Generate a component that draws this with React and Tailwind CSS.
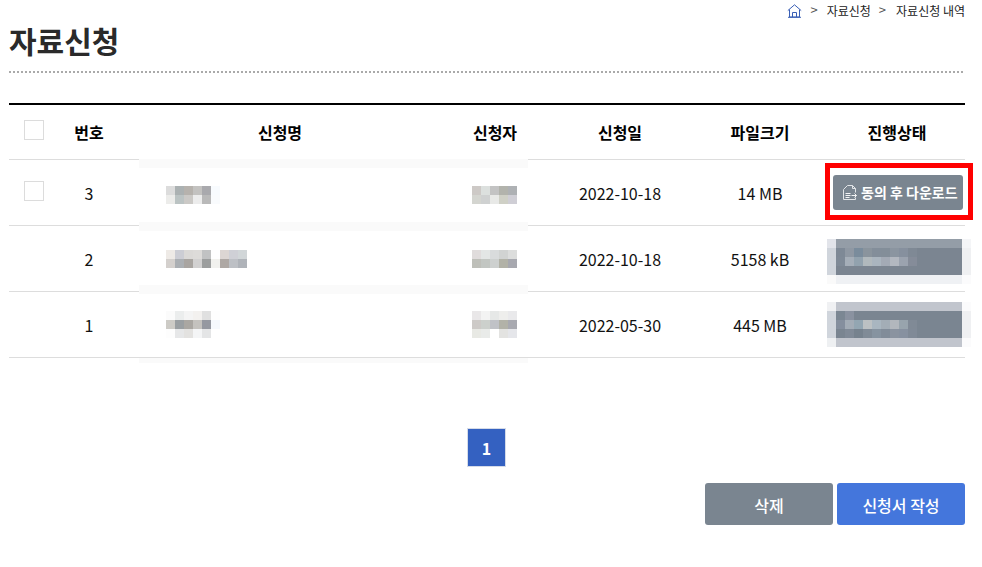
const FONT = "font-['Noto_Sans_CJK_KR','Noto_Sans',sans-serif]";
const GRID = "grid grid-cols-[50px_60px_322px_108px_142px_138px_136px] items-center";

const m = (s) => s.split(" ").map((c) => "#" + c);

const rows = [
  {
    no: 3,
    date: "2022-10-18",
    size: "14 MB",
    check: true,
    band: "top-[-1px]",
    name: [m("dcdcdc abb1b2 b6b2ad c3c2c0 a9a9ad f8fbfe"), m("ececea bbc3c3 cbc9c6 ececec b9b9b9 f9fbfd")],
    user: [m("cdc9c6 dce0de c3c3c3 b2b3ac aeb1b4"), m("d4d5d0 cfd1d1 e8e9e7 cfd0c6 cfced5")],
  },
  {
    no: 2,
    date: "2022-10-18",
    size: "5158 kB",
    band: "top-[-4px]",
    name: [
      m("eeeae6 cccdd4 dbd9d7 dddbd9 c1c2c3 fefeff dcd6d3 cfd0d6 d1d6d8"),
      m("d4d0cd abafb3 a9a5a1 d2d1d1 9c9e9e f1f1ee aea8a4 bdc0c5 afb3b9"),
    ],
    user: [m("e0dcdc e3e6e5 d9dbdc d1d3d2 dcdddc"), m("bebfb9 c2c6c2 cdd0cf b2b2a7 a7a8af")],
    status: [
      m("e2e4ea 949da7 949da7 949da7 949da7 949da7 949da7 949da7 949da7 949da7 949da7 949da7 949da7 949da7 949da7 f4f5f7"),
      m("d0d5dc 7e8996 8f98a3 7a8c9c 8a949d 838e9a 838e99 8b95a0 86909e 7f8995 7b8591 7b8591 7b8591 7b8591 7b8591 eff0f2"),
      m("d0d5dc 7f8a97 a5aeb8 92a2ae b1b9bd aab5bf a3aab5 b3b8c0 9ba3af 858c99 7b8591 7b8591 7b8591 7b8591 7b8591 eff0f2"),
      m("d0d5dc 7b8591 7b8591 7b8591 7b8591 7b8591 7b8591 7b8591 7b8591 7b8591 7b8591 7b8591 7b8591 7b8591 7b8591 eff0f2"),
      m("fafafa eff1f4 eff1f4 eff1f4 eff1f4 eff1f4 eff1f4 eff1f4 eff1f4 eff1f4 eff1f4 eff1f4 eff1f4 eff1f4 eff1f4 fbfbfc"),
    ],
  },
  {
    no: 1,
    date: "2022-05-30",
    size: "445 MB",
    band: "top-[-7px]",
    name: [
      m("fbfbfb ebeded f4f4f4 f3f1ef e0e0e0 fefefe"),
      m("cdcbc6 9a9fa2 aaa7a2 c4c2be 9598a0 f6f9fd"),
      m("fdfdfd e6e7e8 e3e2e0 f4f5f6 e4e5e6 ffffff"),
    ],
    user: [
      m("e9e7e8 f3f3f3 e6e8e7 eeeeec e9e9eb"),
      m("cdcac7 ccd0cc c0c2c7 b2b2a8 a8a9b0"),
      m("e8e9e4 e9ebe9 ffffff e3e3e1 e5e6ea"),
    ],
    status: [
      m("f0f1f3 c1c5cd c1c5cd c1c5cd c1c5cd c1c5cd c1c5cd c1c5cd c1c5cd c1c5cd c1c5cd c1c5cd c1c5cd c1c5cd c1c5cd fbfbfc"),
      m("d0d5dc 7b8793 8a92a0 7a8591 7a8591 7a8591 7a8591 7a8591 7a8591 7a8591 7a8591 7a8591 7a8591 7a8591 7a8591 eff0f2"),
      m("d0d5dc 858f9e a3acb6 93a6b2 bcc1c3 a9b6c0 a3adb6 b2b7bd 98a4ad 808a96 7a8591 7a8591 7a8591 7a8591 7a8591 eff0f2"),
      m("d0d5dc 7a8591 808a97 76828e 808b97 8693a0 818c99 8a93a0 8791a0 808a97 7a8591 7a8591 7a8591 7a8591 7a8591 eff0f2"),
      m("eef0f2 c1c5cd c1c5cd c1c5cd c1c5cd c1c5cd c1c5cd c1c5cd c1c5cd c1c5cd c1c5cd c1c5cd c1c5cd c1c5cd c1c5cd fbfbfc"),
    ],
  },
];

function Mosaic({ cells, className }) {
  return (
    <div className={"flex flex-col " + className}>
      {cells.map((line, i) => (
        <div key={i} className="flex">
          {line.map((c, j) => (
            <div key={j} className="w-[9px] h-[9px]" style={{ background: c }} />
          ))}
        </div>
      ))}
    </div>
  );
}

function Checkbox() {
  return <div className="w-[20px] h-[20px] border border-[#dcdcdc] bg-white ml-[15px]" />;
}

function FileIcon() {
  return (
    <svg width="16" height="18" viewBox="0 0 16 18" fill="none" stroke="#e2e5e8" strokeWidth="1" className="mt-[1px]">
      <path d="M1.5 5.5L5.5 1.5h5l3 3v4" />
      <path d="M10.5 1.5v3h3" />
      <path d="M1.5 5.5v10h12v-2" />
      <path d="M3.5 9.5h5M3.5 11.5h5M3.5 13.5h4" stroke="#f4f5f6" />
      <path d="M9.5 11.5h5M12.5 9.5l2 2-2 2" stroke="#f4f5f6" />
    </svg>
  );
}

function HomeIcon() {
  return (
    <svg width="15" height="14" viewBox="0 0 15 14" fill="none" stroke="#3a5fb5" strokeWidth="1">
      <path d="M0.8 6.6L7.5 0.8l6.7 5.8" />
      <path d="M2.5 5.5v7.5h10V5.5" />
      <path d="M5.5 13V8.5h4V13" />
      <path d="M1 13.3h13" />
    </svg>
  );
}

export default function App() {
  return (
    <div className={"w-[982px] h-[567px] bg-white pl-[9px] pr-[17px] overflow-hidden text-[#111] " + FONT}>
      <div className="h-[22px] flex items-center justify-end text-[12px] text-[#222]">
        <HomeIcon />
        <span className="text-[#555] text-[13px] ml-[8px] -mt-[3px]">&gt;</span>
        <span className="ml-[9px]">자료신청</span>
        <span className="text-[#555] text-[13px] ml-[8px] -mt-[3px]">&gt;</span>
        <span className="ml-[10px]">자료신청 내역</span>
      </div>
      <h1 className="h-[49px] text-[30px] leading-[36px] font-bold text-[#2a2a2a]">자료신청</h1>
      <div className="h-[2px] bg-[repeating-linear-gradient(90deg,#aaa_0,#aaa_2px,transparent_2px,transparent_4px)]" />

      <div className="relative mt-[30px] border-t-2 border-black">
        <div className={GRID + " h-[55px] border-b border-[#dddddd] text-[16px] font-bold text-center text-black"}>
          <div className="-mt-[4px]"><Checkbox /></div>
          <div>번호</div>
          <div>신청명</div>
          <div>신청자</div>
          <div>신청일</div>
          <div>파일크기</div>
          <div>진행상태</div>
        </div>
        {rows.map((r) => (
          <div key={r.no} className={GRID + " relative h-[66px] border-b border-[#dddddd] text-[16px] text-center"}>
            <div className={"absolute left-[130px] w-[389px] h-[9px] bg-[#fafafa] " + r.band} />
            <div>{r.check && <div className="-mt-[4px]"><Checkbox /></div>}</div>
            <div>{r.no}</div>
            <div className="pl-[47px]">
              <Mosaic cells={r.name} className={r.no === 3 ? "mt-[5px]" : "mt-0"} />
            </div>
            <div className="pl-[31px]">
              <Mosaic cells={r.user} className={r.no === 3 ? "mt-[5px]" : "mt-0"} />
            </div>
            <div>{r.date}</div>
            <div>{r.size}</div>
            <div>
              {r.status ? (
                <Mosaic cells={r.status} className={"-ml-[2px] w-[144px] " + (r.no === 2 ? "mt-[6px]" : "mt-[0px]")} />
              ) : (
                <button className="ml-[4px] w-[130px] h-[35px] rounded-[3px] bg-[#7a8590] text-white text-[14px] font-bold flex items-center justify-start pl-[9px] gap-[3px]">
                  <FileIcon />
                  동의 후 다운로드
                </button>
              )}
            </div>
          </div>
        ))}
        <div className="absolute left-[130px] bottom-[-5px] w-[389px] h-[5px] bg-[#fafafa]" />
        {/* 빨간 강조 박스 */}
        <div className="absolute left-[816px] top-[58px] w-[148px] h-[57px] border-[5px] border-[#ff0000]" />
      </div>

      <div className="mt-[70px] flex justify-center pr-[1px]">
        <div className="w-[39px] h-[39px] border border-[#d5dbe8] bg-[#3461c1] text-white font-bold text-[16px] flex items-center justify-center">
          1
        </div>
      </div>

      <div className="mt-[16px] flex justify-end gap-[4px] text-[16px] font-medium text-white">
        <button className="w-[128px] h-[42px] rounded-[3px] bg-[#7a8590] pt-[1px]">삭제</button>
        <button className="w-[128px] h-[42px] rounded-[3px] bg-[#4476dc] pt-[1px]">신청서 작성</button>
      </div>
    </div>
  );
}
